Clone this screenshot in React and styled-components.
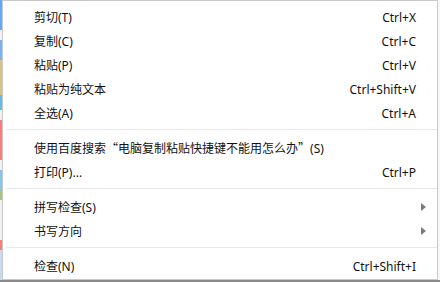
import React from 'react';
import styled, { createGlobalStyle } from 'styled-components';

const GlobalStyle = createGlobalStyle`
  html, body {
    margin: 0;
    padding: 0;
    background: #f7f7f7;
  }
  body {
    font-family: "Noto Sans", "Noto Sans CJK SC", sans-serif;
  }
`;

const Screen = styled.div`
  width: 440px;
  height: 282px;
  display: flex;
  align-items: flex-start;
  overflow: hidden;
  background: linear-gradient(#f7f7f7 0 280px, #8a8a8a 280px);
`;

// what shows of the web page behind the menu
const PageEdge = styled.div`
  width: 2px;
  height: 282px;
  flex: none;
  background: linear-gradient(
    #6aa8ee 0 30px, #f2f2f2 30px 40px, #7ab2ee 40px 60px,
    #d8c08e 60px 95px, #6ab8dc 95px 110px, #f2f2f2 110px 120px,
    #ee8080 120px 160px, #f2f2f2 160px 170px, #8cc2ea 170px 190px,
    #a8c47c 190px 200px, #f2f2f2 200px 240px, #ee8080 240px 250px,
    #cbd9ea 250px 280px, #8a8a8a 280px
  );
`;

const Menu = styled.div`
  width: 436px;
  height: 280px;
  box-sizing: border-box;
  flex: none;
  background: #ffffff;
  border: 1px solid #c9c9c9;
  padding: 4px 0 1px;
  font-size: 12px;
  color: #111;
`;

const Item = styled.div`
  height: 24px;
  display: flex;
  align-items: center;
  padding: 0 21px 0 31px;
  white-space: nowrap;
`;

const Label = styled.span`
  flex: 1;
`;

const Quote = styled.span`
  font-family: "Noto Sans CJK SC", sans-serif;
`;

const Shortcut = styled.span`
  color: #111;
`;

const Arrow = styled.span`
  width: 0;
  height: 0;
  margin-right: -10px;
  border-top: 4px solid transparent;
  border-bottom: 4px solid transparent;
  border-left: 5px solid #7a7a7a;
`;

const Separator = styled.div`
  height: 1px;
  background: #e9e9e9;
  margin: 4px 0 6px 3px;
`;

const search = (
  <>
    使用百度搜索<Quote>“</Quote>电脑复制粘贴快捷键不能用怎么办<Quote>”</Quote>(S)
  </>
);

const groups = [
  [
    { id: 'cut', label: '剪切(T)', key: 'Ctrl+X' },
    { id: 'copy', label: '复制(C)', key: 'Ctrl+C' },
    { id: 'paste', label: '粘贴(P)', key: 'Ctrl+V' },
    { id: 'plain', label: '粘贴为纯文本', key: 'Ctrl+Shift+V' },
    { id: 'all', label: '全选(A)', key: 'Ctrl+A' },
  ],
  [
    { id: 'search', label: search },
    { id: 'print', label: '打印(P)...', key: 'Ctrl+P' },
  ],
  [
    { id: 'spell', label: '拼写检查(S)', sub: true },
    { id: 'dir', label: '书写方向', sub: true },
  ],
  [
    { id: 'inspect', label: '检查(N)', key: 'Ctrl+Shift+I' },
  ],
];

const App = () => (
  <>
    <GlobalStyle />
    <Screen>
      <PageEdge />
      <Menu>
        {groups.map((group, gi) => (
          <React.Fragment key={gi}>
            {gi > 0 && <Separator />}
            {group.map(item => (
              <Item key={item.id}>
                <Label>{item.label}</Label>
                {item.key && <Shortcut>{item.key}</Shortcut>}
                {item.sub && <Arrow />}
              </Item>
            ))}
          </React.Fragment>
        ))}
      </Menu>
    </Screen>
  </>
);

export default App;
